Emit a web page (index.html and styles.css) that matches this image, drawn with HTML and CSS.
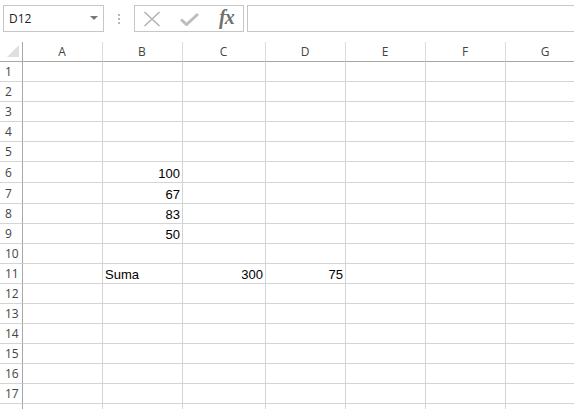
FILE: index.html
```html
<!DOCTYPE html>
<html>
<head>
<meta charset="utf-8">
<link rel="stylesheet" href="styles.css">
</head>
<body>
<div class="toolbar">
  <div class="namebox">
    <span class="name">D12</span>
    <span class="caret"></span>
  </div>
  <div class="grip"><i></i><i></i><i></i></div>
  <div class="fnbox">
    <svg class="ico-x" width="18" height="16" viewBox="0 0 18 16"><path d="M1.5 1 L16.5 15 M16.5 1 L1.5 15" stroke="#b4b4b4" stroke-width="1.6" fill="none"/></svg>
    <svg class="ico-ok" width="19" height="14" viewBox="0 0 19 14"><path d="M1 7.5 L6.5 12.5 L18 2" stroke="#bdbdbd" stroke-width="3" fill="none"/></svg>
    <span class="fx">fx</span>
  </div>
  <div class="formula"></div>
</div>
<div class="sheet">
  <div class="corner"><span class="tri"></span></div>
  <div class="ch">A</div><div class="ch">B</div><div class="ch">C</div><div class="ch">D</div><div class="ch">E</div><div class="ch">F</div><div class="ch">G</div>

  <div class="rh">1</div><div class="c"></div><div class="c"></div><div class="c"></div><div class="c"></div><div class="c"></div><div class="c"></div><div class="c"></div>
  <div class="rh">2</div><div class="c"></div><div class="c"></div><div class="c"></div><div class="c"></div><div class="c"></div><div class="c"></div><div class="c"></div>
  <div class="rh">3</div><div class="c"></div><div class="c"></div><div class="c"></div><div class="c"></div><div class="c"></div><div class="c"></div><div class="c"></div>
  <div class="rh">4</div><div class="c"></div><div class="c"></div><div class="c"></div><div class="c"></div><div class="c"></div><div class="c"></div><div class="c"></div>
  <div class="rh">5</div><div class="c"></div><div class="c"></div><div class="c"></div><div class="c"></div><div class="c"></div><div class="c"></div><div class="c"></div>
  <div class="rh tall">6</div><div class="c tall"></div><div class="c num tall">100</div><div class="c tall"></div><div class="c tall"></div><div class="c tall"></div><div class="c tall"></div><div class="c tall"></div>
  <div class="rh tall">7</div><div class="c tall"></div><div class="c num tall">67</div><div class="c tall"></div><div class="c tall"></div><div class="c tall"></div><div class="c tall"></div><div class="c tall"></div>
  <div class="rh">8</div><div class="c"></div><div class="c num">83</div><div class="c"></div><div class="c"></div><div class="c"></div><div class="c"></div><div class="c"></div>
  <div class="rh">9</div><div class="c"></div><div class="c num">50</div><div class="c"></div><div class="c"></div><div class="c"></div><div class="c"></div><div class="c"></div>
  <div class="rh">10</div><div class="c"></div><div class="c"></div><div class="c"></div><div class="c"></div><div class="c"></div><div class="c"></div><div class="c"></div>
  <div class="rh">11</div><div class="c"></div><div class="c txt">Suma</div><div class="c num">300</div><div class="c num">75</div><div class="c"></div><div class="c"></div><div class="c"></div>
  <div class="rh">12</div><div class="c"></div><div class="c"></div><div class="c"></div><div class="c"></div><div class="c"></div><div class="c"></div><div class="c"></div>
  <div class="rh">13</div><div class="c"></div><div class="c"></div><div class="c"></div><div class="c"></div><div class="c"></div><div class="c"></div><div class="c"></div>
  <div class="rh">14</div><div class="c"></div><div class="c"></div><div class="c"></div><div class="c"></div><div class="c"></div><div class="c"></div><div class="c"></div>
  <div class="rh">15</div><div class="c"></div><div class="c"></div><div class="c"></div><div class="c"></div><div class="c"></div><div class="c"></div><div class="c"></div>
  <div class="rh">16</div><div class="c"></div><div class="c"></div><div class="c"></div><div class="c"></div><div class="c"></div><div class="c"></div><div class="c"></div>
  <div class="rh">17</div><div class="c"></div><div class="c"></div><div class="c"></div><div class="c"></div><div class="c"></div><div class="c"></div><div class="c"></div>
  <div class="rh"></div><div class="c"></div><div class="c"></div><div class="c"></div><div class="c"></div><div class="c"></div><div class="c"></div><div class="c"></div>
</div>
</body>
</html>
```

FILE: styles.css
```css
* { box-sizing: border-box; }
html, body {
  margin: 0;
  padding: 0;
  background: #fff;
  width: 574px;
  height: 409px;
  overflow: hidden;
}
body {
  font-family: "Open Sans", "Noto Sans", sans-serif;
}
.toolbar {
  display: flex;
  height: 38px;
  padding: 5px 0 0 3px;
  align-items: flex-start;
}
.namebox {
  width: 101px;
  height: 27px;
  border: 1px solid #c6c6c6;
  display: flex;
  align-items: center;
  justify-content: space-between;
  padding: 0 5px 0 5px;
}
.name {
  font-size: 12px;
  color: #222;
}
.caret {
  width: 0;
  height: 0;
  border-left: 4px solid transparent;
  border-right: 4px solid transparent;
  border-top: 4px solid #777;
  margin-top: -2px;
}
.grip {
  width: 30px;
  height: 27px;
  display: flex;
  flex-direction: column;
  align-items: center;
  justify-content: center;
  gap: 2px;
}
.grip i {
  display: block;
  width: 2px;
  height: 2px;
  background: #b8b8b8;
}
.fnbox {
  width: 110px;
  height: 27px;
  border: 1px solid #c6c6c6;
  display: flex;
  align-items: center;
  padding-left: 8px;
}
.ico-x { margin-top: 1px; }
.ico-ok { margin-left: 19px; margin-top: 1px; }
.fx {
  margin-left: 20px;
  font-family: "Liberation Serif", serif;
  font-style: italic;
  font-weight: bold;
  font-size: 20px;
  color: #707070;
  margin-top: -3px;
  letter-spacing: -1px;
}
.formula {
  margin-left: 3px;
  flex: 1;
  height: 27px;
  border: 1px solid #c6c6c6;
  border-right: none;
}
.sheet {
  margin-top: 4px;
  display: grid;
  grid-template-columns: 23px 80px 80px 83px 80px 80px 80px 80px;
}
.corner {
  height: 20px;
  border-right: 1px solid #a8a8a8;
  border-bottom: 1px solid #a8a8a8;
  position: relative;
}
.tri {
  position: absolute;
  right: 3px;
  bottom: 4px;
  width: 0;
  height: 0;
  border-left: 12px solid transparent;
  border-bottom: 12px solid #dfdfdf;
}
.ch {
  height: 20px;
  border-right: 1px solid #dcdcdc;
  border-bottom: 1px solid #a8a8a8;
  font-size: 12px;
  color: #444;
  text-align: center;
  line-height: 19px;
  padding-left: 1px;
  padding-right: 2px;
}
.rh {
  height: 20px;
  border-right: 1px solid #a8a8a8;
  border-bottom: 1px solid #d4d4d4;
  font-size: 12px;
  color: #444;
  padding-left: 5px;
  line-height: 20px;
}
.c {
  height: 20px;
  border-right: 1px solid #d4d4d4;
  border-bottom: 1px solid #d4d4d4;
  font-family: "Liberation Sans", Arial, sans-serif;
  font-size: 13px;
  color: #000;
  line-height: 20px;
  padding: 1px 2px 0 2px;
  white-space: nowrap;
}
.rh.tall, .c.tall { height: 21px; line-height: 21px; }
.num { text-align: right; }
.txt { text-align: left; }
```
